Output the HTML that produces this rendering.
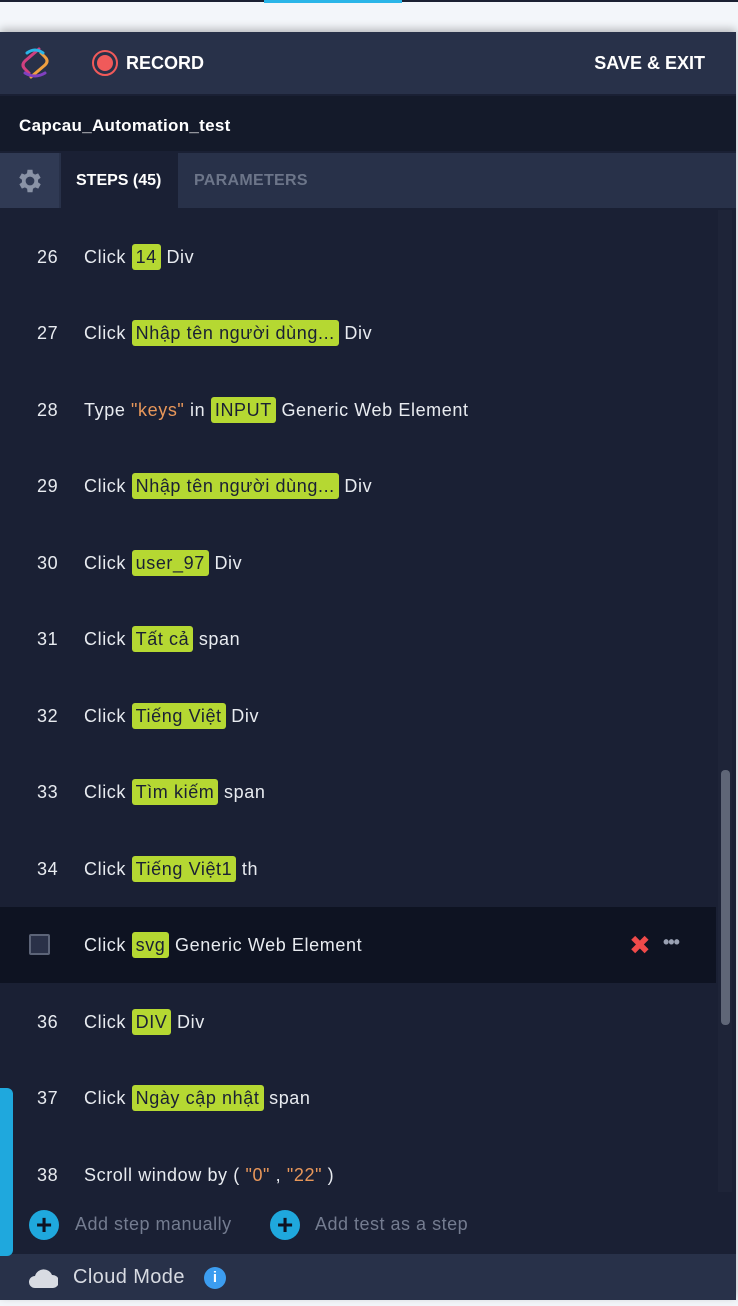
<!DOCTYPE html>
<html><head><meta charset="utf-8"><style>
*{margin:0;padding:0;box-sizing:border-box}
body{width:738px;height:1306px;background:#f3f6fa;font-family:"Liberation Sans","DejaVu Sans",sans-serif;position:relative;overflow:hidden}
.topline{position:absolute;left:0;top:0;width:738px;height:2px;background:#1b2133}
.topblue{position:absolute;left:264px;top:0;width:138px;height:3px;background:#2ab5e8}
.panel{position:absolute;left:0;top:32px;width:736px;height:1268px;background:#1a2034;box-shadow:0 -3px 8px rgba(0,0,0,.25)}
.hdr{position:absolute;left:0;top:0;width:736px;height:62px;background:#283149;color:#fff;font-weight:bold;font-size:18px}
.title{position:absolute;left:0;top:64px;width:736px;height:55px;background:#141a2a;color:#fff;font-weight:bold;font-size:17px;padding:20px 0 0 19px;letter-spacing:.3px}
.tabs{position:absolute;left:0;top:121px;width:736px;height:55px;background:#283149}
.row{position:absolute;left:0;width:716px;height:76px;color:#e8ebf0;font-size:18px;line-height:76px;letter-spacing:.6px}
.num{position:absolute;left:37px}
.txt{position:absolute;left:84px;white-space:nowrap}
.c{background:#b5d832;color:#1a2034;border-radius:3px;padding:3px 4px}
.o{color:#e8975a}
</style></head><body>
<div class="topline"></div><div class="topblue"></div>
<div class="panel">
<div class="hdr">
<svg style="position:absolute;left:17px;top:13px" width="36" height="36" viewBox="0 0 36 36" fill="none" stroke-width="3" stroke-linecap="round">
<path d="M22 4 L8 16 Q4 20 8 24 L12 28" stroke="#d04080"/>
<path d="M14 32 L28 20 Q32 16 28 12 L24 8" stroke="#f0a040"/>
<path d="M10 8 Q18 2 26 8" stroke="#2ab5e8"/>
<path d="M8 28 Q18 34 28 28" stroke="#8040c0"/>
</svg>
<div style="position:absolute;left:92px;top:18px;width:26px;height:26px;border:2px solid #f05a5a;border-radius:50%"></div>
<div style="position:absolute;left:97px;top:23px;width:16px;height:16px;background:#f05a5a;border-radius:50%"></div>
<div style="position:absolute;left:126px;top:21px">RECORD</div>
<div style="position:absolute;right:31px;top:21px">SAVE &amp; EXIT</div>
</div>
<div class="title">Capcau_Automation_test</div>
<div class="tabs">
<div style="position:absolute;left:0;top:0;width:59px;height:55px;background:#303a54"></div>
<svg style="position:absolute;left:15px;top:13px" width="30" height="30" viewBox="0 0 24 24"><path fill="#8a93a6" d="M19.4 13a7.5 7.5 0 000-2l2.1-1.6-2-3.5-2.5 1a7 7 0 00-1.7-1L15 3h-4l-.4 2.9a7 7 0 00-1.7 1l-2.5-1-2 3.5L6.6 11a7.5 7.5 0 000 2l-2.1 1.6 2 3.5 2.5-1a7 7 0 001.7 1L11 21h4l.4-2.9a7 7 0 001.7-1l2.5 1 2-3.5zM13 15.5a3.5 3.5 0 110-7 3.5 3.5 0 010 7z" transform="translate(-1 0)"/></svg>
<div style="position:absolute;left:61px;top:0;width:117px;height:55px;background:#1a2034;color:#fff;font-weight:bold;font-size:16px;padding:19px 0 0 15px">STEPS (45)</div>
<div style="position:absolute;left:194px;top:19px;color:#6c7589;font-weight:bold;font-size:16px;letter-spacing:.3px">PARAMETERS</div>
</div>
<div style="position:absolute;left:0;top:178px;width:736px;height:1042px;background:#1a2034;overflow:hidden">
<div style="position:absolute;left:718px;top:0;width:14px;height:982px;background:#1e2438"></div>
<div style="position:absolute;left:721px;top:560px;width:9px;height:255px;background:#5f6677;border-radius:4px"></div>
<div class="row" style="top:9px"><span class="num">26</span><span class="txt">Click <span class="c">14</span> Div</span></div>
<div class="row" style="top:85px"><span class="num">27</span><span class="txt">Click <span class="c">Nhập tên người dùng...</span> Div</span></div>
<div class="row" style="top:162px"><span class="num">28</span><span class="txt">Type <span class="o">"keys"</span> in <span class="c">INPUT</span> Generic Web Element</span></div>
<div class="row" style="top:238px"><span class="num">29</span><span class="txt">Click <span class="c">Nhập tên người dùng...</span> Div</span></div>
<div class="row" style="top:315px"><span class="num">30</span><span class="txt">Click <span class="c">user_97</span> Div</span></div>
<div class="row" style="top:391px"><span class="num">31</span><span class="txt">Click <span class="c">Tất cả</span> span</span></div>
<div class="row" style="top:468px"><span class="num">32</span><span class="txt">Click <span class="c">Tiếng Việt</span> Div</span></div>
<div class="row" style="top:544px"><span class="num">33</span><span class="txt">Click <span class="c">Tìm kiếm</span> span</span></div>
<div class="row" style="top:621px"><span class="num">34</span><span class="txt">Click <span class="c">Tiếng Việt1</span> th</span></div>
<div class="row" style="top:697px;background:#0e1322"><span style="position:absolute;left:29px;top:27px;width:21px;height:21px;border:2px solid #5c6478;border-radius:2px;background:#2a3148"></span><span class="txt">Click <span class="c">svg</span> Generic Web Element</span>
<span style="position:absolute;left:629px;top:0;color:#ef4a4a;font-size:26px;font-weight:bold">✖</span>
<span style="position:absolute;left:663px;top:-3px;color:#9aa1b3;font-size:18px;font-weight:bold;letter-spacing:-1px">•••</span></div>
<div class="row" style="top:774px"><span class="num">36</span><span class="txt">Click <span class="c">DIV</span> Div</span></div>
<div class="row" style="top:850px"><span class="num">37</span><span class="txt">Click <span class="c">Ngày cập nhật</span> span</span></div>
<div class="row" style="top:927px"><span class="num">38</span><span class="txt">Scroll window by ( <span class="o">"0"</span> , <span class="o">"22"</span> )</span></div>
<div style="position:absolute;left:29px;top:1000px;width:30px;height:30px;border-radius:50%;background:#1fa8dd;color:#0e1322;font-size:28px;font-weight:bold;line-height:29px;text-align:center">+</div>
<div style="position:absolute;left:75px;top:1004px;color:#747c90;font-size:18px;letter-spacing:.5px">Add step manually</div>
<div style="position:absolute;left:270px;top:1000px;width:30px;height:30px;border-radius:50%;background:#1fa8dd;color:#0e1322;font-size:28px;font-weight:bold;line-height:29px;text-align:center">+</div>
<div style="position:absolute;left:315px;top:1004px;color:#747c90;font-size:18px;letter-spacing:.5px">Add test as a step</div>
</div>
<div style="position:absolute;left:0;top:1222px;width:736px;height:46px;background:#283149">
<svg style="position:absolute;left:28px;top:13px" width="30" height="22" viewBox="0 0 30 22"><path fill="#d8dbe2" d="M7 21a6 6 0 010-12 9 9 0 0117-1 6.5 6.5 0 011 13z"/></svg>
<div style="position:absolute;left:73px;top:12px;color:#d8dbe2;font-size:20px;letter-spacing:.4px">Cloud Mode</div>
<div style="position:absolute;left:204px;top:13px;width:22px;height:22px;border-radius:50%;background:#3c9df0;color:#fff;font-weight:bold;font-size:15px;text-align:center;line-height:22px">i</div>
</div>
</div>
<div style="position:absolute;left:0;top:1088px;width:13px;height:168px;background:#1fa8dd;border-radius:0 6px 6px 0"></div>
</body></html>
